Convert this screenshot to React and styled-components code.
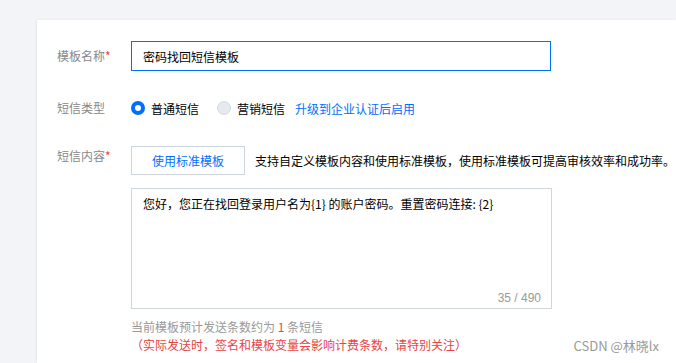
import React from 'react'
import styled, { createGlobalStyle } from 'styled-components'

const GlobalStyle = createGlobalStyle`
  html, body {
    margin: 0;
    padding: 0;
    background: #f3f4f7;
    font-family: "Noto Sans CJK SC", "Liberation Sans", sans-serif;
    font-size: 12px;
  }
`

const Page = styled.div`
  width: 676px;
  height: 363px;
  overflow: hidden;
  padding: 20px 0 0 37px;
  box-sizing: border-box;
  position: relative;
`

const Card = styled.div`
  background: #fff;
  height: 100%;
  box-shadow: -1px 0 3px rgba(0, 0, 0, 0.06);
  padding: 21px 0 0 20px;
  box-sizing: border-box;
`

const Row = styled.div`
  display: flex;
  align-items: ${p => p.$top ? 'flex-start' : 'center'};
  margin-bottom: ${p => p.$gap || 0}px;
`

const Label = styled.div`
  width: 74px;
  flex: none;
  color: #888;
  line-height: ${p => p.$lh || 18}px;
  padding-top: ${p => p.$pt || 0}px;
  span { color: #e54545; }
`

const Field = styled.div`
  display: flex;
  flex-direction: column;
`

const Input = styled.div`
  width: 420px;
  height: 30px;
  box-sizing: border-box;
  border: 1px solid #006eff;
  padding-left: 11px;
  display: flex;
  align-items: center;
  color: #000;
`

const RadioGroup = styled.div`
  display: flex;
  align-items: center;
  height: 20px;
`

const Radio = styled.span`
  width: 14px;
  height: 14px;
  box-sizing: border-box;
  border-radius: 50%;
  border: ${p => p.$checked ? '4px solid #006eff' : '1px solid #d5d9e0'};
  background: ${p => p.$checked ? '#fff' : '#e6e9ee'};
  margin-right: 6px;
  flex: none;
`

const RadioText = styled.span`
  color: #000;
  margin-right: ${p => p.$mr || 0}px;
`

const Link = styled.span`
  color: #006eff;
`

const Toolbar = styled.div`
  display: flex;
  align-items: center;
  gap: 10px;
  margin-bottom: 13px;
`

const Button = styled.div`
  width: 114px;
  height: 29px;
  box-sizing: border-box;
  border: 1px solid #cfd5de;
  color: #006eff;
  display: flex;
  align-items: center;
  justify-content: center;
`

const Hint = styled.span`
  color: #000;
`

const TextArea = styled.div`
  width: 421px;
  height: 121px;
  box-sizing: border-box;
  border: 1px solid #cfd5de;
  padding: 6px 10px 0 11px;
  position: relative;
  color: #000;
`

const Counter = styled.span`
  position: absolute;
  right: 10px;
  bottom: 3px;
  color: #999;
  font-family: "Liberation Sans", sans-serif;
`

const Note = styled.div`
  margin-top: 9px;
  color: #999;
  line-height: 18px;
  em { font-style: normal; color: #e54545; }
`

const Warn = styled.div`
  color: #e54545;
  line-height: 18px;
`

const Mark = styled.div`
  position: absolute;
  right: 17px;
  bottom: 8px;
  color: #999;
  font-size: 13px;
`

const App = () => {
  return (
    <>
      <GlobalStyle />
      <Page>
        <Card>
          <Row $gap={27}>
            <Label>模板名称<span>*</span></Label>
            <Input>密码找回短信模板</Input>
          </Row>
          <Row $gap={28}>
            <Label>短信类型</Label>
            <RadioGroup>
              <Radio $checked />
              <RadioText $mr={18}>普通短信</RadioText>
              <Radio />
              <RadioText $mr={10}>营销短信</RadioText>
              <Link>升级到企业认证后启用</Link>
            </RadioGroup>
          </Row>
          <Row $top>
            <Label $pt={1}>短信内容<span>*</span></Label>
            <Field>
              <Toolbar>
                <Button>使用标准模板</Button>
                <Hint>支持自定义模板内容和使用标准模板，使用标准模板可提高审核效率和成功率。</Hint>
              </Toolbar>
              <TextArea>
                您好，您正在找回登录用户名为{'{1}'} 的账户密码。重置密码连接: {'{2}'}
                <Counter>35 / 490</Counter>
              </TextArea>
              <Note>当前模板预计发送条数约为 <em>1</em> 条短信</Note>
              <Warn>（实际发送时，签名和模板变量会影响计费条数，请特别关注）</Warn>
            </Field>
          </Row>
        </Card>
        <Mark>CSDN @林晓lx</Mark>
      </Page>
    </>
  )
}

export default App
